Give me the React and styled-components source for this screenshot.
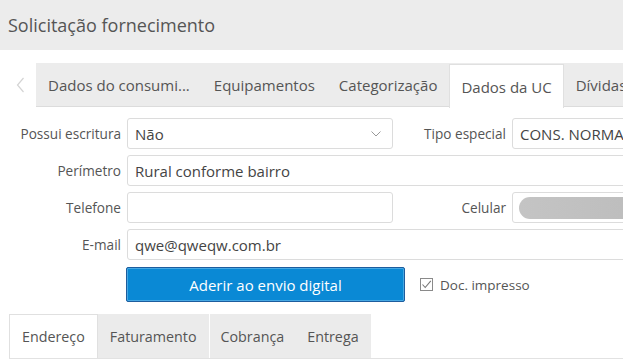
import React from "react";
import styled, { createGlobalStyle } from "styled-components";

const Global = createGlobalStyle`
  html, body { margin: 0; padding: 0; background: #fff; }
  body { font-family: "Open Sans", "Noto Sans", sans-serif; color: #555; overflow: hidden; }
  * { box-sizing: border-box; }
`;

const Page = styled.div`
  width: 623px;
  height: 363px;
  overflow: hidden;
`;

const Header = styled.div`
  height: 50px;
  background: #ececec;
  padding-left: 8px;
  font-size: 18px;
  line-height: 50px;
  color: #555;
`;

const TabStrip = styled.div`
  display: flex;
  margin-top: 13px;
  height: 44px;
  width: 760px;
`;

const Chevron = styled.div`
  width: 36px;
  display: flex;
  align-items: center;
  justify-content: center;
  padding-left: 4px;
`;

const TabBar = styled.div`
  flex: 1;
  display: flex;
  background: #ececec;
  border-bottom: 1px solid #dcdcdc;
`;

const Tab = styled.div`
  height: ${(p) => (p.$active ? "44px" : "43px")};
  margin-top: ${(p) => (p.$active ? "1px" : "0")};
  padding: 0 ${(p) => p.$pad || 12}px;
  display: flex;
  align-items: center;
  font-size: 15px;
  color: #555;
  white-space: nowrap;
  background: ${(p) => (p.$active ? "#fff" : "transparent")};
  border: ${(p) => (p.$active ? "1px solid #e0e0e0" : "none")};
  border-bottom: none;
  position: relative;
  z-index: 1;
`;

const Form = styled.div`
  margin-top: 11px;
  width: 760px;
  display: flex;
  flex-direction: column;
  gap: 6px;
`;

const Row = styled.div`
  display: grid;
  grid-template-columns: ${(p) => p.$cols};
  column-gap: 6px;
  height: 31px;
  align-items: center;
`;

const Label = styled.div`
  text-align: right;
  font-size: 13.6px;
  color: #555;
  white-space: nowrap;
`;

const Input = styled.div`
  height: 100%;
  border: 1px solid #dcdcdc;
  border-radius: 3px;
  background: #fff;
  display: flex;
  align-items: center;
  padding: 0 7px;
  font-size: 15px;
  color: #444;
  white-space: nowrap;
  overflow: hidden;
`;

const Caret = styled.div`
  margin-left: auto;
  margin-right: 4px;
  display: flex;
`;

const Blur = styled.div`
  height: 22px;
  width: 200px;
  flex-shrink: 0;
  border-radius: 11px;
  background: linear-gradient(90deg, #c4c4c4, #bdbdbd 60%, #c6c6c6);
  filter: blur(0.6px);
`;

const ActionRow = styled.div`
  display: flex;
  align-items: center;
  margin-top: 7px;
  padding-left: 126px;
`;

const Button = styled.button`
  width: 279px;
  height: 35px;
  background: #0a89d5;
  border: 1px solid #1d5d9e;
  box-shadow: inset 0 0 0 1px #46a8e3;
  border-radius: 2px;
  color: #fff;
  font-family: inherit;
  font-size: 15px;
  padding: 0;
`;

const Check = styled.label`
  display: flex;
  align-items: center;
  margin-left: 15px;
  gap: 7px;
  font-size: 13.5px;
  color: #555;
`;

const Box = styled.span`
  width: 13px;
  height: 13px;
  border: 1px solid #8a8a8a;
  display: flex;
  align-items: center;
  justify-content: center;
  background: #fff;
`;

const SubTabs = styled.div`
  display: flex;
  margin: 12px 0 0 9px;
  height: 45px;
  border-bottom: 1px solid #e2e2e2;
`;

const SubTab = styled.div`
  height: 44px;
  padding: 0 ${(p) => p.$pad || 12}px;
  display: flex;
  align-items: center;
  font-size: 14.3px;
  color: #555;
  background: ${(p) => (p.$active ? "#fff" : "#ebebeb")};
  border: ${(p) => (p.$active ? "1px solid #e0e0e0" : "none")};
  border-bottom: none;
  border-right: ${(p) => (p.$sep ? "1px solid #fff" : p.$active ? "1px solid #e0e0e0" : "none")};
`;

export default function App() {
  return (
    <Page>
      <Global />
      <Header>Solicitação fornecimento</Header>
      <TabStrip>
        <Chevron>
          <svg width="9" height="16" viewBox="0 0 9 16">
            <path d="M7.5 1 L1.5 8 L7.5 15" fill="none" stroke="#d4d4d4" strokeWidth="1.2" />
          </svg>
        </Chevron>
        <TabBar>
          <Tab $pad={12}>Dados do consumi...</Tab>
          <Tab $pad={12}>Equipamentos</Tab>
          <Tab $pad={12}>Categorização</Tab>
          <Tab $active $pad={11}>Dados da UC</Tab>
          <Tab $pad={12}>Dívidas</Tab>
        </TabBar>
      </TabStrip>
      <Form>
        <Row $cols="121px 266px 107px 1fr">
          <Label>Possui escritura</Label>
          <Input>
            Não
            <Caret>
              <svg width="10" height="6" viewBox="0 0 10 6">
                <path d="M0.5 0.5 L5 5 L9.5 0.5" fill="none" stroke="#999" strokeWidth="1" />
              </svg>
            </Caret>
          </Input>
          <Label>Tipo especial</Label>
          <Input>CONS. NORMAL</Input>
        </Row>
        <Row $cols="121px 1fr">
          <Label>Perímetro</Label>
          <Input>Rural conforme bairro</Input>
        </Row>
        <Row $cols="121px 266px 107px 1fr">
          <Label>Telefone</Label>
          <Input />
          <Label>Celular</Label>
          <Input style={{ padding: "0 6px" }}>
            <Blur />
          </Input>
        </Row>
        <Row $cols="121px 1fr">
          <Label>E-mail</Label>
          <Input>qwe@qweqw.com.br</Input>
        </Row>
      </Form>
      <ActionRow>
        <Button>Aderir ao envio digital</Button>
        <Check>
          <Box>
            <svg width="11" height="11" viewBox="0 0 11 11">
              <path d="M1.5 5.5 L4.2 8.5 L9.8 1.8" fill="none" stroke="#777" strokeWidth="1.1" />
            </svg>
          </Box>
          Doc. impresso
        </Check>
      </ActionRow>
      <SubTabs>
        <SubTab $active $pad={12}>Endereço</SubTab>
        <SubTab $sep $pad={12}>Faturamento</SubTab>
        <SubTab $pad={11}>Cobrança</SubTab>
        <SubTab $pad={12}>Entrega</SubTab>
      </SubTabs>
    </Page>
  );
}
